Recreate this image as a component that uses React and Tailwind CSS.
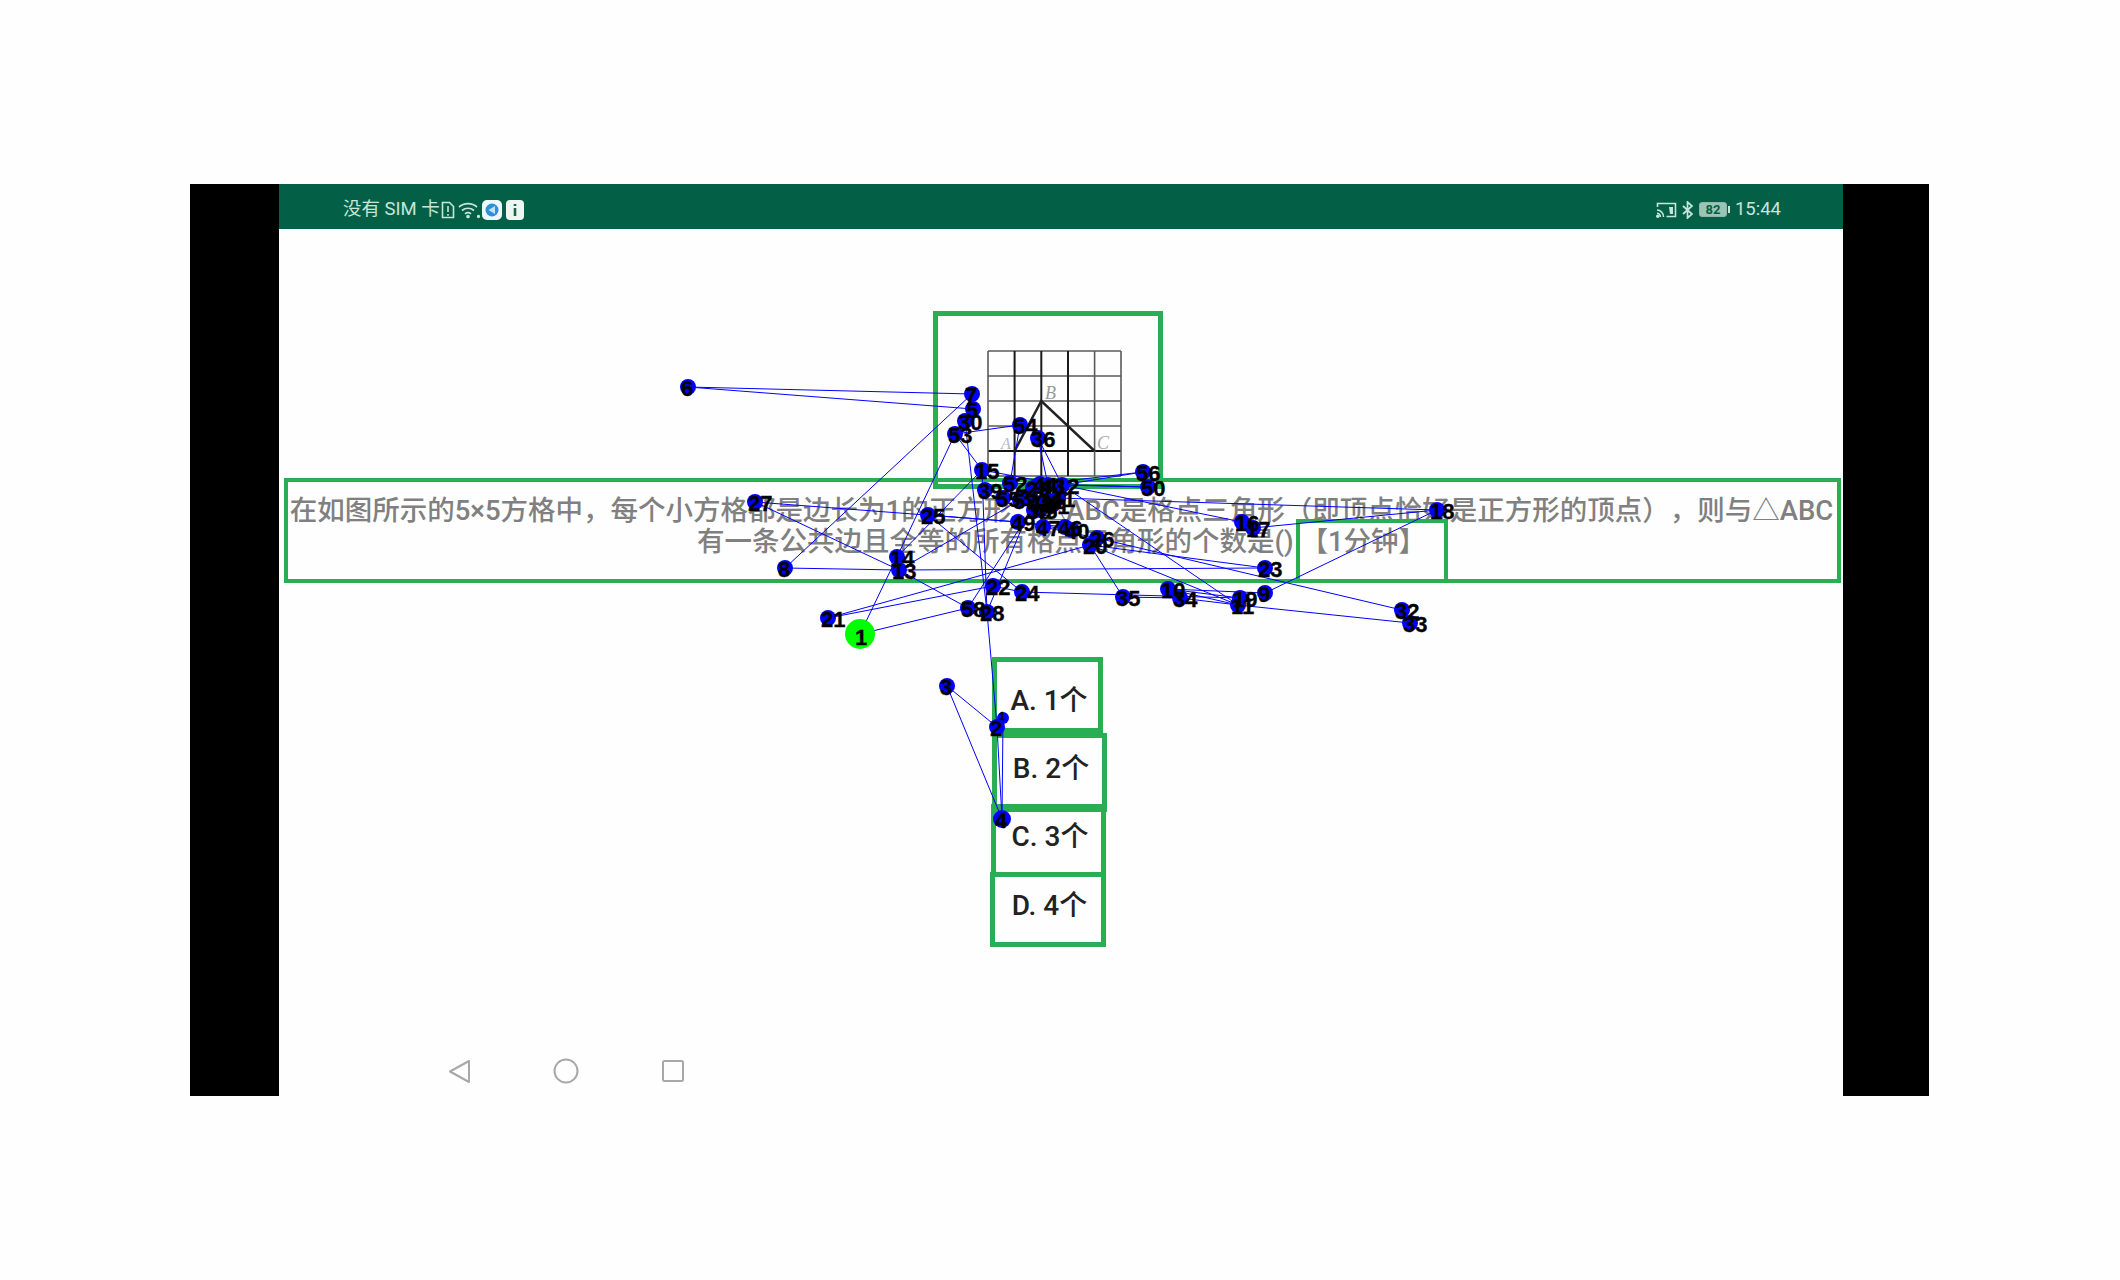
const P = {
  2:[997,727],3:[947,686],4:[1002,819],5:[973,409],6:[688,387],7:[972,394],8:[785,568],9:[1265,593],10:[1168,589],
  11:[1238,605],12:[1062,485],13:[899,570],14:[897,557],15:[982,470],16:[1242,522],17:[1253,528],18:[1437,510],19:[1240,598],
  20:[1090,545],21:[828,618],22:[993,586],23:[1265,568],24:[1022,592],25:[928,515],26:[1097,538],27:[755,502],28:[987,612],
  29:[1033,488],30:[965,421],31:[1046,500],32:[1402,610],33:[1410,623],34:[1180,598],35:[1123,597],36:[1038,438],37:[1027,497],
  38:[1034,510],39:[985,490],40:[1072,530],41:[1058,498],43:[1048,485],44:[1040,484],45:[1040,510],46:[1065,527],47:[1043,527],
  48:[1036,503],49:[1018,522],51:[1052,505],52:[1010,483],53:[955,434],54:[1020,425],55:[1003,498],56:[1143,472],57:[1020,500],
  58:[968,608],50:[1148,487],
};
const X = { 1:[860,634], 99:[1003,718] };
const pt = (k) => P[k] || X[k];
const SEG = [
  [1,14],[1,58],[2,3],[3,4],[4,2],[4,99],[28,2],[5,6],[6,7],[7,8],[8,13],[13,14],[14,15],[14,53],[53,54],[53,15],[13,27],[27,49],
  [25,24],[25,49],[13,58],[13,23],[13,57],[21,22],[21,20],[22,24],[24,19],[20,35],[20,11],[35,34],[34,11],[10,11],[10,19],[10,9],
  [9,18],[17,18],[16,12],[12,56],[12,50],[15,12],[15,28],[30,28],[54,52],[36,43],[36,12],[12,11],[47,26],[26,32],[33,11],[23,20],
  [58,48],[28,44],[49,46],[49,40],[55,57],[57,44],[52,12],[50,44],[56,44],[41,18],[16,17],
];
const DOTS = Object.keys(P);

function StatusBar() {
  return (
    <div className="flex h-[45px] shrink-0 items-center justify-between bg-[#045f47] pl-[64px] pr-[62px] pt-[6px] text-[18.500px] text-[#c5e6da] [font-family:Roboto,'Noto_Sans_CJK_SC',sans-serif]">
      <div className="flex items-center">
        <span className="whitespace-nowrap">没有 SIM 卡</span>
        <svg width="14" height="18" viewBox="0 0 14 18" className="ml-[1px]" fill="none" stroke="#c5e6da" strokeWidth="1.600">
          <path d="M1.500 1.500h7l4 4v11h-11z" />
          <path d="M7 5v6M7 13v1.800" />
        </svg>
        <svg width="22" height="18" viewBox="0 0 22 18" className="ml-[3px]" fill="none" stroke="#c5e6da" strokeWidth="1.700">
          <path d="M1 6c5-4.600 13-4.600 18 0M4 9.500c3.400-3 8.600-3 12 0M7 12.800c1.800-1.500 4.200-1.500 6 0" />
          <circle cx="10" cy="15.500" r="1" fill="#c5e6da" />
          <circle cx="20.500" cy="15.500" r="0.800" fill="#c5e6da" />
        </svg>
        <svg width="20" height="20" viewBox="0 0 20 20" className="ml-[2px]">
          <rect width="20" height="20" rx="5" fill="#eef8fb" />
          <circle cx="10" cy="10" r="6.500" fill="#2f8fdc" />
          <path d="M13 6L6.500 10l6.500 4z" fill="#bfe3f7" />
        </svg>
        <svg width="18" height="20" viewBox="0 0 18 20" className="ml-[4px]">
          <rect width="18" height="20" rx="4" fill="#eef6f3" />
          <path d="M9 4v2M9 8v8" stroke="#1f5f4e" strokeWidth="2.600" />
        </svg>
      </div>
      <div className="flex items-center">
        <svg width="21" height="16" viewBox="0 0 21 16" fill="none" stroke="#c5e6da" strokeWidth="1.600">
          <path d="M1.500 5V1.500h18v13h-9" />
          <path d="M1 8c3.600 0 6.500 3 6.500 7M1 11.200c1.900 0 3.400 1.700 3.400 3.800" />
          <circle cx="1.800" cy="14.200" r="1" fill="#c5e6da" />
          <path d="M13 5h4v7h-3z" fill="#c5e6da" stroke="none" />
        </svg>
        <svg width="12" height="18" viewBox="0 0 12 18" className="ml-[5px]" fill="none" stroke="#c5e6da" strokeWidth="1.700">
          <path d="M1 5l9 8-4.500 4V1l4.500 4-9 8" />
        </svg>
        <div className="ml-[5px] flex items-center">
          <div className="flex h-[15px] w-[28px] items-center justify-center rounded-[3px] border border-[#8fb8a8] bg-[#9cc4b5] text-[13px] font-bold leading-none text-[#045f47]">82</div>
          <div className="ml-[1px] h-[7px] w-[2px] bg-[#c5e6da]" />
        </div>
        <span className="ml-[5px]">15:44</span>
      </div>
    </div>
  );
}

function GridPicture() {
  const xs = [988, 1014.600, 1041.300, 1068, 1094.600, 1121];
  const ys = [352, 377, 402, 427, 452, 477];
  return (
    <svg width="220" height="168" viewBox="938 317 220 168" className="block">
      {ys.map((y) => (
        <line key={y} x1="988" x2="1121" y1={y} y2={y} stroke={y === 452 ? "#111" : "#5a5a5a"} strokeWidth={y === 452 ? 2 : 1.600} />
      ))}
      {xs.map((x, i) => (
        <line key={x} x1={x} x2={x} y1="352" y2="477" stroke={i >= 1 && i <= 3 ? "#1a1a1a" : "#5a5a5a"} strokeWidth={i >= 1 && i <= 3 ? 2 : 1.600} />
      ))}
      <path d="M1014.600 452L1041.300 402L1094.600 452" fill="none" stroke="#222" strokeWidth="2.400" />
      <text x="1045" y="400" fontSize="18" fill="#999" fontStyle="italic" fontFamily="'Liberation Serif',serif">B</text>
      <text x="1001" y="450" fontSize="16" fill="#bbb" fontStyle="italic" fontFamily="'Liberation Serif',serif">A</text>
      <text x="1097" y="450" fontSize="18" fill="#aaa" fontStyle="italic" fontFamily="'Liberation Serif',serif">C</text>
    </svg>
  );
}

function Option({ children, className }) {
  return (
    <div className={"flex items-center justify-center border-[5px] border-[#2aae54] pl-[3px] text-[28px] font-medium text-[#222] " + className}>
      <span className="whitespace-nowrap">{children}</span>
    </div>
  );
}

function Overlay() {
  return (
    <svg width="2120" height="1280" viewBox="0 0 2120 1280" className="pointer-events-none absolute left-0 top-0">
      {SEG.map(([a, b], i) => {
        const p = pt(a), q = pt(b);
        return <line key={i} x1={p[0]} y1={p[1]} x2={q[0]} y2={q[1]} stroke="#0000ff" strokeWidth="1" />;
      })}
      {DOTS.map((k) => (
        <circle key={k} cx={P[k][0]} cy={P[k][1]} r={k === "4" ? 9 : 8} fill="#0000ff" />
      ))}
      <circle cx="1003" cy="718" r="6" fill="#0000ff" />
      <circle cx="860" cy="634" r="15" fill="#00ff00" />
      <g fontFamily="'Liberation Sans',sans-serif" fontWeight="700" fontSize="22" fill="#000" stroke="#000" strokeWidth="0.300">
        {DOTS.map((k) => (
          <text key={k} x={P[k][0] - 7} y={P[k][1] + 9}>{k}</text>
        ))}
        <text x="855" y="645">1</text>
        <text x="999" y="720" fontSize="11">1</text>
      </g>
    </svg>
  );
}

export default function App() {
  return (
    <div className="relative h-[1280px] w-[2120px] overflow-hidden bg-[#fefefe] pl-[190px] pt-[184px] [font-family:Roboto,'Noto_Sans_CJK_SC',sans-serif]">
      <div className="flex h-[912px] w-[1739px] bg-black pl-[89px] pr-[86px]">
        <div className="flex w-[1564px] flex-col bg-[#fefefe]">
          <StatusBar />
          <div className="ml-[654px] mt-[82px] h-[178px] w-[230px] border-[5px] border-[#2aae54]">
            <GridPicture />
          </div>
          <div className="relative ml-[5px] mt-[-11px] h-[105px] w-[1557px] border-[4px] border-[#2aae54] pr-[2px] pt-[13px] text-center text-[27.500px] font-medium leading-[31px] text-[#808080] [text-spacing-trim:space-all]">
            <div className="whitespace-nowrap">在如图所示的5×5方格中，每个小方格都是边长为1的正方形，△ABC是格点三角形（即顶点恰好是正方形的顶点），则与△ABC</div>
            <div className="whitespace-nowrap">有一条公共边且全等的所有格点三角形的个数是() 【1分钟】</div>
            <div className="absolute bottom-[-4px] left-[1008px] h-[64px] w-[152px] border-[4px] border-[#2aae54]" />
          </div>
          <div className="ml-[711px] mt-[74px] flex w-[118px] flex-col">
            <Option className="ml-[2px] h-[76px] w-[111px] pt-[11px]">A. 1个</Option>
            <Option className="ml-[2px] h-[79px] w-[115px] pb-[8px]">B. 2个</Option>
            <Option className="ml-[1px] mt-[-8px] h-[73px] w-[115px] pb-[8px]">C. 3个</Option>
            <Option className="mt-[-5px] h-[75px] w-[116px] pb-[8px]">D. 4个</Option>
          </div>
          <div className="ml-[169px] mt-[111px] flex items-center gap-[82px]">
            <svg width="23" height="25" viewBox="0 0 23 25" fill="none" stroke="#a8a8a8" strokeWidth="2" strokeLinejoin="round">
              <path d="M21 2v21L2 12.500z" />
            </svg>
            <svg width="26" height="26" viewBox="0 0 26 26" fill="none" stroke="#a8a8a8" strokeWidth="2">
              <circle cx="13" cy="13" r="11.500" />
            </svg>
            <svg width="24" height="24" viewBox="0 0 24 24" fill="none" stroke="#a8a8a8" strokeWidth="2">
              <rect x="2" y="2" width="20" height="20" rx="1.500" />
            </svg>
          </div>
        </div>
      </div>
      <Overlay />
    </div>
  );
}
